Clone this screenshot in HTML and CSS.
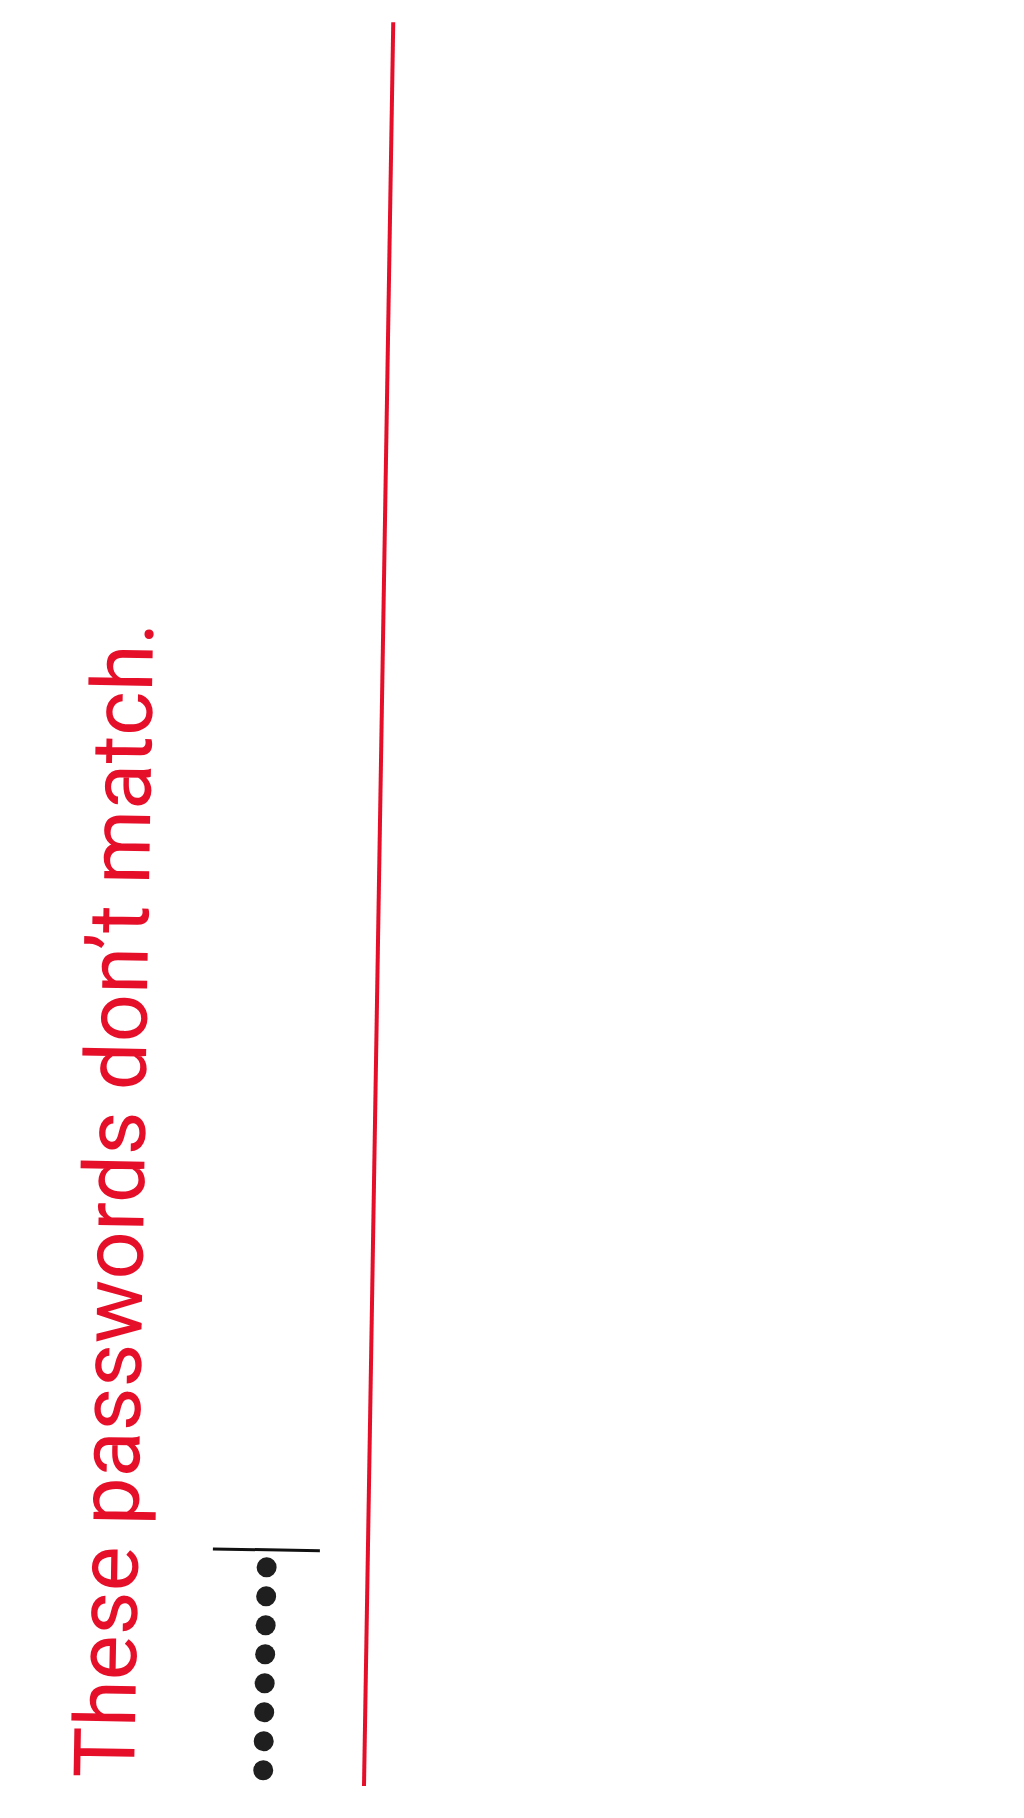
FILE: index.html
```html
<!DOCTYPE html>
<html lang="en">
<head>
    <meta charset="UTF-8">
    <meta name="viewport" content="width=device-width, initial-scale=1.0">
    <title>Confirm password</title>
    <link rel="stylesheet" href="styles.css">
</head>
<body>

<!-- Password field in its error state, laid on its side -->
<div class="field">
    <div class="error">These passwords don’t match.</div>
    <div class="input-row">
        <span class="dot"></span>
        <span class="dot"></span>
        <span class="dot"></span>
        <span class="dot"></span>
        <span class="dot"></span>
        <span class="dot"></span>
        <span class="dot"></span>
        <span class="dot"></span>
        <span class="cursor"></span>
    </div>
</div>

</body>
</html>
```

FILE: styles.css
```css
html, body {
    margin: 0;
    padding: 0;
    background-color: #fff;
}

body {
    width: 1024px;
    height: 1818px;
    position: relative;
    overflow: hidden;
    font-family: Roboto, "Liberation Sans", sans-serif;
}

/* the whole field is turned so its text reads bottom to top */
.field {
    position: absolute;
    left: 366px;
    top: 1475px;
    width: 1764px;
    height: 311px;
    box-sizing: border-box;
    display: flex;
    flex-direction: column;
    border-bottom: 4px solid #e50f2a;
    transform-origin: 0 100%;
    transform: rotate(-89.05deg);
}

.error {
    height: 100px;
    line-height: 100px;
    font-size: 85px;
    color: #e50f2a;
    padding-left: 4px;
    white-space: nowrap;
}

.input-row {
    height: 207px;
    box-sizing: border-box;
    padding: 54px 0 46px 4px;
    display: flex;
    align-items: center;
    gap: 9px;
}

.dot {
    width: 20px;
    height: 20px;
    border-radius: 50%;
    background-color: #1f1f1f;
}

.cursor {
    width: 3px;
    height: 107px;
    margin-left: -3px;
    background-color: #111;
}
```
